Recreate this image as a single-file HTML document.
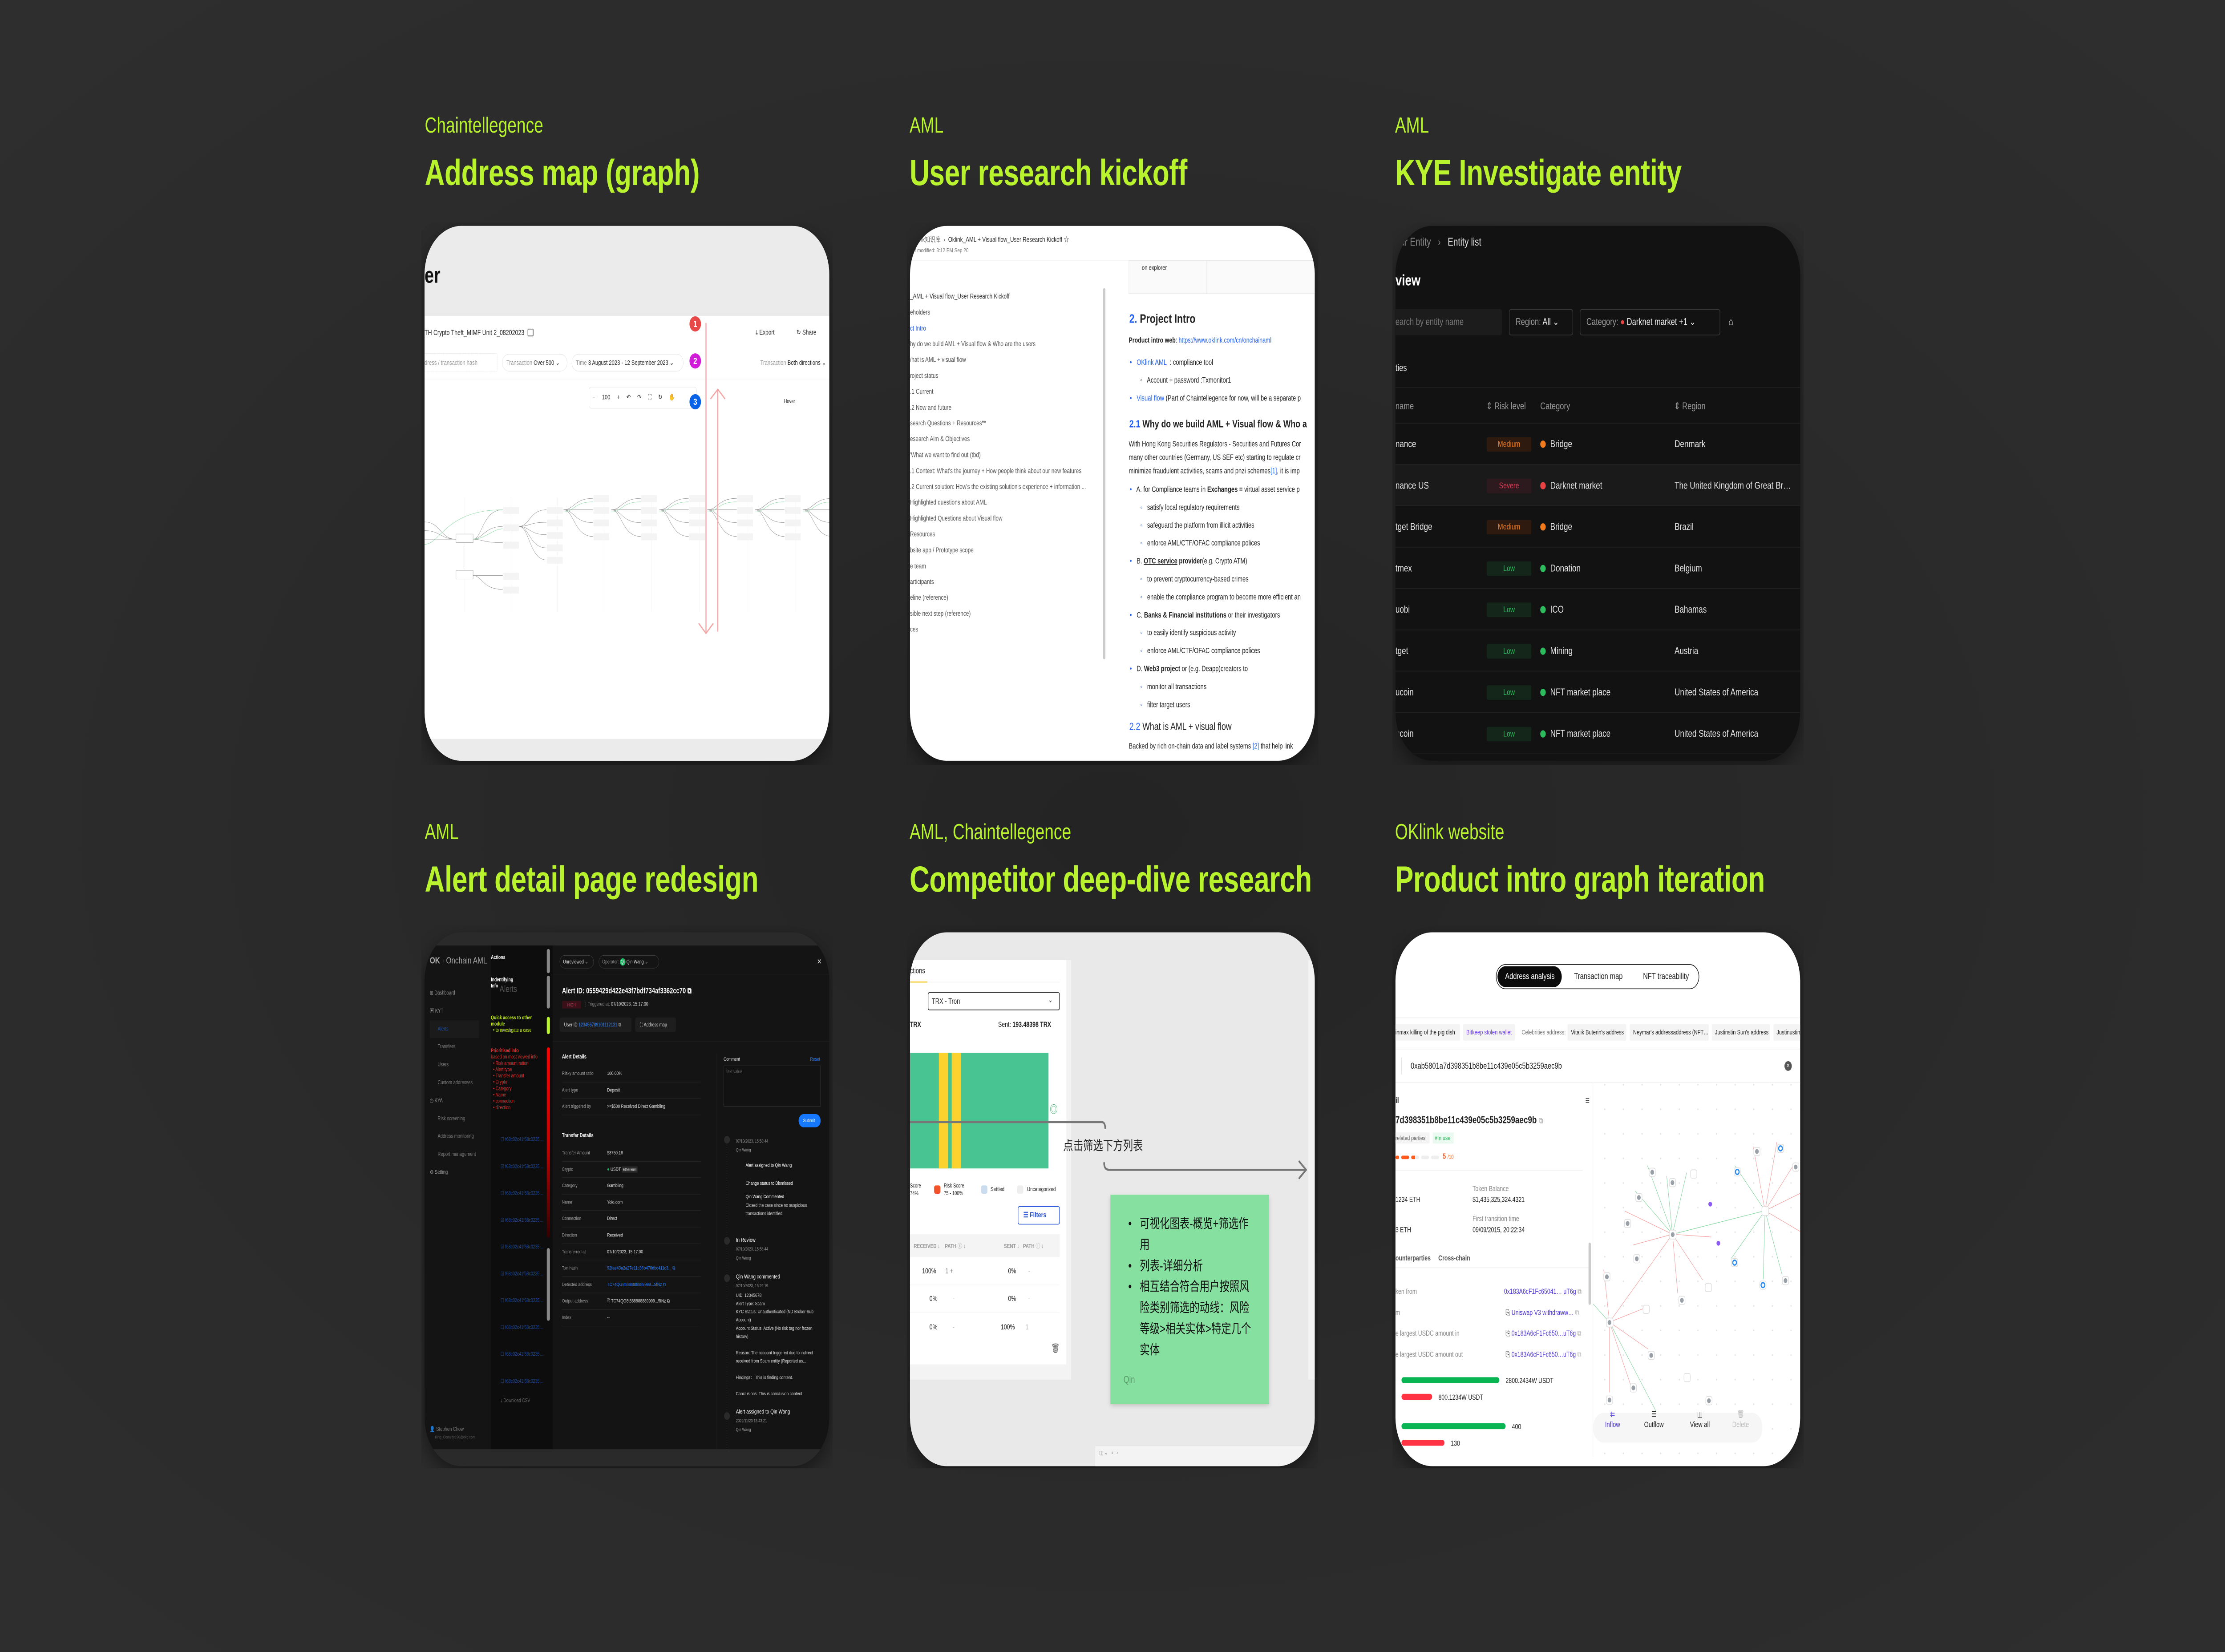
<!DOCTYPE html>
<html><head><meta charset="utf-8">
<style>
*{margin:0;padding:0;box-sizing:border-box}
html,body{width:100%;height:100%;overflow:hidden;background:#2a2a2a}
#root{position:absolute;left:0;top:0;width:6600px;height:3713px;transform-origin:0 0;overflow:hidden;background:radial-gradient(ellipse at 50% 50%,#242424 0%,#2b2b2b 60%,#2e2e2e 100%);font-family:"Liberation Sans","Noto Sans CJK SC",sans-serif}
.a{position:absolute}
.lbl{position:absolute;color:#b8f32e;font-size:49px;line-height:1;white-space:nowrap}
.ttl{position:absolute;color:#b8f32e;font-size:82px;font-weight:bold;line-height:1;white-space:nowrap;letter-spacing:-0.5px}
.wrap{position:absolute;width:1568px;height:1568px;transform:scale(0.77806);transform-origin:0 0;overflow:hidden}
.card{position:absolute;left:12px;top:10px;width:1543px;height:1545px;border-radius:140px;overflow:hidden;box-shadow:0 20px 60px rgba(0,0,0,.45)}
.t{position:absolute;white-space:nowrap;line-height:1}
</style></head><body>
<div id="root">

<div class="lbl" style="left:1260px;top:258px">Chaintellegence</div>
<div class="ttl" style="left:1260px;top:348px">Address map (graph)</div>
<div class="lbl" style="left:2698px;top:258px">AML</div>
<div class="ttl" style="left:2698px;top:348px">User research kickoff</div>
<div class="lbl" style="left:4138px;top:258px">AML</div>
<div class="ttl" style="left:4138px;top:348px">KYE Investigate entity</div>
<div class="lbl" style="left:1260px;top:1846px">AML</div>
<div class="ttl" style="left:1260px;top:1936px">Alert detail page redesign</div>
<div class="lbl" style="left:2698px;top:1846px">AML, Chaintellegence</div>
<div class="ttl" style="left:2698px;top:1936px">Competitor deep-dive research</div>
<div class="lbl" style="left:4138px;top:1846px">OKlink website</div>
<div class="ttl" style="left:4138px;top:1936px">Product intro graph iteration</div>

<!-- CARD 1 -->
<div class="wrap" style="left:1250px;top:500px">
<div class="card" style="background:#fff">
 <div class="a" style="left:0;top:0;width:1543px;height:260px;background:#ebebeb"></div>
 <div class="t" style="left:0;top:110px;font-size:64px;font-weight:bold;color:#111">er</div>
 <div class="a" style="left:0;top:1482px;width:1543px;height:70px;background:#ebebeb"></div>
 <div class="t" style="left:0;top:298px;font-size:21px;color:#222">TH Crypto Theft_MIMF Unit 2_08202023</div>
 <div class="a" style="left:393px;top:297px;width:22px;height:22px;border:2px solid #333;border-radius:3px"></div>
 <div class="t" style="left:1262px;top:298px;font-size:20px;color:#222">⤓ Export</div>
 <div class="t" style="left:1418px;top:298px;font-size:20px;color:#222">↻ Share</div>
 <div class="a" style="left:-20px;top:368px;width:298px;height:54px;border:1.5px dashed #ddd;border-radius:6px"></div>
 <div class="t" style="left:0;top:386px;font-size:19px;color:#999">dress / transaction hash</div>
 <div class="a" style="left:296px;top:370px;width:248px;height:50px;border:1.5px solid #ddd;border-radius:25px"></div>
 <div class="t" style="left:312px;top:386px;font-size:19px;color:#999">Transaction <span style="color:#222">Over 500 ⌄</span></div>
 <div class="a" style="left:561px;top:370px;width:426px;height:50px;border:1.5px solid #ddd;border-radius:25px"></div>
 <div class="t" style="left:577px;top:386px;font-size:19px;color:#999">Time <span style="color:#222">3 August 2023 - 12 September 2023 ⌄</span></div>
 <div class="t" style="left:1280px;top:386px;font-size:19px;color:#999">Transaction <span style="color:#222">Both directions ⌄</span></div>
 <div class="a" style="left:0;top:442px;width:1543px;height:1px;background:#eee"></div>
 <div class="a" style="left:626px;top:465px;width:412px;height:62px;border:1.5px solid #ddd;border-radius:10px"></div>
 <div class="t" style="left:640px;top:486px;font-size:19px;color:#333;word-spacing:20px">− 100 + ↶ ↷ ⛶ ↻ ✋</div>
 <div class="t" style="left:1370px;top:500px;font-size:16px;color:#222">Hover</div>
 <svg class="a" style="left:0;top:0" width="1543" height="1545" viewBox="0 0 1543 1545">
  <g stroke="#eee" stroke-width="1">
   <line x1="151" y1="785" x2="151" y2="1115"/><line x1="330" y1="785" x2="330" y2="1115"/><line x1="506" y1="785" x2="506" y2="1115"/><line x1="684" y1="785" x2="684" y2="1115"/><line x1="866" y1="785" x2="866" y2="1115"/><line x1="1049" y1="785" x2="1049" y2="1115"/><line x1="1232" y1="785" x2="1232" y2="1115"/><line x1="1415" y1="785" x2="1415" y2="1115"/>
  </g>
  <defs><g id="fan" fill="none" stroke="#888" stroke-width="1">
   <path d="M0 0 C40 0 40 -33 112 -33"/><path d="M0 0 C40 0 60 0 112 0"/><path d="M0 0 C40 0 40 37 112 37"/><path d="M0 0 C40 0 40 77 112 77"/>
   <path d="M0 6 C40 6 40 -23 112 -23" stroke="#7fd49c"/>
   <rect x="114" y="-42" width="60" height="20" fill="#f4f4f4" stroke="none"/><rect x="114" y="-8" width="60" height="20" fill="#f4f4f4" stroke="none"/><rect x="114" y="28" width="60" height="20" fill="#f4f4f4" stroke="none"/><rect x="114" y="68" width="60" height="20" fill="#f4f4f4" stroke="none"/>
  </g></defs>
  <use href="#fan" x="530" y="820"/><use href="#fan" x="712" y="820"/><use href="#fan" x="895" y="820"/><use href="#fan" x="1078" y="820"/><use href="#fan" x="1260" y="820"/><use href="#fan" x="1443" y="820"/>
  <g fill="none" stroke="#888" stroke-width="1">
   <path d="M360 868 C400 868 400 820 465 820"/><path d="M360 868 C400 868 400 856 465 856"/><path d="M360 868 C400 868 400 892 465 892"/><path d="M360 868 C400 868 400 930 465 930"/><path d="M360 868 C400 868 400 965 465 965"/>
   <path d="M185 905 C220 905 220 820 298 820"/><path d="M185 905 C220 905 230 868 298 868"/><path d="M185 905 C220 905 220 915 298 915"/>
   <path d="M0 855 C60 855 60 905 120 905"/><path d="M0 880 C60 880 60 905 120 905"/><path d="M0 905 L120 905"/>
   <path d="M150 925 L150 990"/><path d="M185 1010 L298 1010"/><path d="M185 1010 C220 1010 220 1050 298 1050"/>
   <path d="M0 920 C60 920 80 820 298 820" stroke="#7fd49c"/><path d="M185 905 C230 905 260 875 298 875" stroke="#7fd49c"/>
  </g>
  <g fill="#f4f4f4"><rect x="300" y="812" width="60" height="20"/><rect x="300" y="862" width="60" height="20"/><rect x="300" y="912" width="60" height="20"/><rect x="467" y="812" width="60" height="20"/><rect x="467" y="848" width="60" height="20"/><rect x="467" y="884" width="60" height="20"/><rect x="467" y="920" width="60" height="20"/><rect x="467" y="956" width="60" height="20"/><rect x="300" y="1002" width="60" height="20"/><rect x="300" y="1042" width="60" height="20"/></g>
  <rect x="120" y="890" width="65" height="25" fill="#fff" stroke="#888"/><rect x="120" y="995" width="65" height="25" fill="#fff" stroke="#888"/>
  <g stroke="#f4a5a5" stroke-width="4" fill="none">
   <line x1="1073" y1="280" x2="1073" y2="1175"/><path d="M1045 1148 L1073 1177 L1101 1148"/>
   <line x1="1118" y1="472" x2="1118" y2="1172"/><path d="M1090 500 L1118 472 L1146 500"/>
  </g>
  <circle cx="1032" cy="283" r="22" fill="#e74848"/><circle cx="1032" cy="390" r="22" fill="#d01ed8"/><circle cx="1032" cy="508" r="22" fill="#0a63e6"/>
  <g fill="#fff" font-family="Liberation Sans" font-weight="bold" font-size="26" text-anchor="middle"><text x="1032" y="292">1</text><text x="1032" y="399">2</text><text x="1032" y="517">3</text></g>
 </svg>
</div></div>

<!-- CARD 2 -->
<div class="wrap" style="left:2690px;top:500px">
<div class="card" style="background:#fff;color:#222">
 <div class="t" style="left:20px;top:30px;font-size:20px;color:#666">Link知识库 &nbsp;›&nbsp; <span style="color:#222">Oklink_AML + Visual flow_User Research Kickoff ☆</span></div>
 <div class="t" style="left:0;top:62px;font-size:17px;color:#777">ast modified: 3:12 PM Sep 20</div>
 <div class="a" style="left:0;top:98px;width:1543px;height:2px;background:#eee"></div>
 <div class="a" style="left:736px;top:180px;width:9px;height:1072px;background:#ccc;border-radius:5px"></div>
 <div class="a" style="left:0;top:182px;font-size:20px;color:#555;line-height:45.8px;white-space:nowrap">
  <div style="color:#333">_AML + Visual flow_User Research Kickoff</div><div>eholders</div><div style="color:#1f5ff5">ct Intro</div><div>hy do we build AML + Visual flow &amp; Who are the users</div><div>/hat is AML + visual flow</div><div>roject status</div><div>.1 Current</div><div>.2 Now and future</div><div>search Questions + Resources**</div><div>esearch Aim &amp; Objectives</div><div>'What we want to find out (tbd)</div><div>.1 Context: What's the journey + How people think about our new features</div><div>.2 Current solution: How's the existing solution's experience + information ...</div><div>Highlighted questions about AML</div><div>Highlighted Questions about Visual flow</div><div>Resources</div><div>bsite app / Prototype scope</div><div>e team</div><div>articipants</div><div>eline (reference)</div><div>sible next step (reference)</div><div>ces</div>
 </div>
 <div class="a" style="left:834px;top:100px;width:720px;height:96px;border:1px solid #ddd;background:#fafafa"></div>
 <div class="a" style="left:1131px;top:100px;width:1px;height:96px;background:#ddd"></div>
 <div class="t" style="left:884px;top:112px;font-size:19px">on explorer</div>
 <div class="t" style="left:836px;top:250px;font-size:36px;font-weight:bold"><span style="color:#1f5ff5">2.</span> Project Intro</div>
 <div class="t" style="left:834px;top:320px;font-size:21px"><b>Product intro web</b>: <span style="color:#1f5ff5">https://www.oklink.com/cn/onchainaml</span></div>
 <div class="a" style="left:838px;top:368px;font-size:22px;line-height:51.8px;white-space:nowrap">
  <div><span style="color:#1f5ff5">•&nbsp;&nbsp; OKlink AML </span>&nbsp;: compliance tool</div>
  <div style="padding-left:40px">◦&nbsp;&nbsp; Account + password :Txmonitor1</div>
  <div><span style="color:#1f5ff5">•&nbsp;&nbsp; Visual flow</span> (Part of Chaintellegence for now, will be a separate p</div>
 </div>
 <div class="t" style="left:836px;top:558px;font-size:30px;font-weight:bold"><span style="color:#1f5ff5">2.1</span> Why do we build AML + Visual flow &amp; Who a</div>
 <div class="a" style="left:834px;top:610px;font-size:22px;line-height:39px;white-space:nowrap">With Hong Kong Securities Regulators - Securities and Futures Cor<br>many other countries (Germany, US SEF etc) starting to regulate cr<br>minimize fraudulent activities, scams and pnzi schemes<span style="color:#1f5ff5">[1]</span>, it is imp</div>
 <div class="a" style="left:838px;top:735px;font-size:22px;line-height:51.8px;white-space:nowrap">
  <div><span style="color:#1f5ff5">•</span>&nbsp;&nbsp; A. for Compliance teams in <b>Exchanges =</b> virtual asset service p</div>
  <div style="padding-left:40px"><span style="color:#1f5ff5">◦</span>&nbsp;&nbsp; satisfy local regulatory requirements</div>
  <div style="padding-left:40px"><span style="color:#1f5ff5">◦</span>&nbsp;&nbsp; safeguard the platform from illicit activities</div>
  <div style="padding-left:40px"><span style="color:#1f5ff5">◦</span>&nbsp;&nbsp; enforce AML/CTF/OFAC compliance polices</div>
  <div><span style="color:#1f5ff5">•</span>&nbsp;&nbsp; B. <b><u>OTC service</u> provider</b>(e.g. Crypto ATM)</div>
  <div style="padding-left:40px"><span style="color:#1f5ff5">◦</span>&nbsp;&nbsp; to prevent cryptocurrency-based crimes</div>
  <div style="padding-left:40px"><span style="color:#1f5ff5">◦</span>&nbsp;&nbsp; enable the compliance program to become more efficient an</div>
  <div><span style="color:#1f5ff5">•</span>&nbsp;&nbsp; C. <b>Banks &amp; Financial institutions</b> or their investigators</div>
  <div style="padding-left:40px"><span style="color:#1f5ff5">◦</span>&nbsp;&nbsp; to easily identify suspicious activity</div>
  <div style="padding-left:40px"><span style="color:#1f5ff5">◦</span>&nbsp;&nbsp; enforce AML/CTF/OFAC compliance polices</div>
  <div><span style="color:#1f5ff5">•</span>&nbsp;&nbsp; D. <b>Web3 project</b> or (e.g. Deapp)creators to</div>
  <div style="padding-left:40px"><span style="color:#1f5ff5">◦</span>&nbsp;&nbsp; monitor all transactions</div>
  <div style="padding-left:40px"><span style="color:#1f5ff5">◦</span>&nbsp;&nbsp; filter target users</div>
 </div>
 <div class="t" style="left:836px;top:1432px;font-size:30px"><span style="color:#1f5ff5">2.2</span> What is AML + visual flow</div>
 <div class="t" style="left:834px;top:1492px;font-size:22px">Backed by rich on-chain data and label systems <span style="color:#1f5ff5">[2]</span> that help link</div>
</div></div>

<!-- CARD 3 -->
<div class="wrap" style="left:4130px;top:500px">
<div class="card" style="background:#121212;color:#e6e6e6">
 <div class="t" style="left:0;top:30px;font-size:32px;color:#888">our Entity &nbsp;&nbsp;›&nbsp;&nbsp; <span style="color:#e6e6e6">Entity list</span></div>
 <div class="t" style="left:0;top:136px;font-size:44px;font-weight:bold;color:#fff">view</div>
 <div class="a" style="left:-10px;top:240px;width:416px;height:76px;background:#1c1c1c;border-radius:8px"></div>
 <div class="t" style="left:0;top:263px;font-size:28px;color:#777">earch by entity name</div>
 <div class="a" style="left:433px;top:240px;width:244px;height:76px;border:2px solid #3a3a3a;border-radius:8px"></div>
 <div class="t" style="left:458px;top:263px;font-size:28px;color:#999">Region: <span style="color:#eee">All ⌄</span></div>
 <div class="a" style="left:703px;top:240px;width:535px;height:76px;border:2px solid #3a3a3a;border-radius:8px"></div>
 <div class="t" style="left:728px;top:263px;font-size:28px;color:#999">Category: <span style="color:#e84343">●</span> <span style="color:#eee">Darknet market +1 ⌄</span></div>
 <div class="t" style="left:1270px;top:262px;font-size:30px;color:#ddd">⌂</div>
 <div class="t" style="left:0;top:396px;font-size:28px">ties</div>
 <div class="a" style="left:0;top:466px;width:1543px;height:2px;background:#222"></div>
 <div class="t" style="left:0;top:507px;font-size:28px;color:#999">name</div>
 <div class="t" style="left:346px;top:507px;font-size:28px;color:#999">⇕ Risk level</div>
 <div class="t" style="left:552px;top:507px;font-size:28px;color:#999">Category</div>
 <div class="t" style="left:1062px;top:507px;font-size:28px;color:#999">⇕ Region</div>
 <div class="a" style="left:0;top:569px;width:1543px;height:2px;background:#222"></div>
 <div class="a" style="left:0;top:690px;width:1543px;height:118px;background:#1a1a1a"></div>
 <div class="a" style="left:0;top:570px;width:1543px;font-size:29px;">
  <style>.r{height:119.5px;position:relative;border-bottom:2px solid #222;overflow:hidden}.r span{position:absolute;top:46px;white-space:nowrap;line-height:1}.bd{position:absolute;left:348px;top:40px;width:170px;height:42px;border-radius:5px;font-size:24px;text-align:center;line-height:42px}.dot{position:absolute;left:552px;top:50px;width:21px;height:21px;border-radius:50%}</style>
  <div class="r"><span style="left:0">nance</span><div class="bd" style="background:#2e1a0f;color:#f07a1e">Medium</div><div class="dot" style="background:#f07a1e"></div><span style="left:590px">Bridge</span><span style="left:1064px">Denmark</span></div>
  <div class="r"><span style="left:0">nance US</span><div class="bd" style="background:#2d1a1e;color:#d9405a">Severe</div><div class="dot" style="background:#e84343"></div><span style="left:590px">Darknet market</span><span style="left:1064px">The United Kingdom of Great Br…</span></div>
  <div class="r"><span style="left:0">tget Bridge</span><div class="bd" style="background:#2e1a0f;color:#f07a1e">Medium</div><div class="dot" style="background:#f07a1e"></div><span style="left:590px">Bridge</span><span style="left:1064px">Brazil</span></div>
  <div class="r"><span style="left:0">tmex</span><div class="bd" style="background:#14251a;color:#2dbb5e">Low</div><div class="dot" style="background:#2dbb5e"></div><span style="left:590px">Donation</span><span style="left:1064px">Belgium</span></div>
  <div class="r"><span style="left:0">uobi</span><div class="bd" style="background:#14251a;color:#2dbb5e">Low</div><div class="dot" style="background:#2dbb5e"></div><span style="left:590px">ICO</span><span style="left:1064px">Bahamas</span></div>
  <div class="r"><span style="left:0">tget</span><div class="bd" style="background:#14251a;color:#2dbb5e">Low</div><div class="dot" style="background:#2dbb5e"></div><span style="left:590px">Mining</span><span style="left:1064px">Austria</span></div>
  <div class="r"><span style="left:0">ucoin</span><div class="bd" style="background:#14251a;color:#2dbb5e">Low</div><div class="dot" style="background:#2dbb5e"></div><span style="left:590px">NFT market place</span><span style="left:1064px">United States of America</span></div>
  <div class="r"><span style="left:0">ucoin</span><div class="bd" style="background:#14251a;color:#2dbb5e">Low</div><div class="dot" style="background:#2dbb5e"></div><span style="left:590px">NFT market place</span><span style="left:1064px">United States of America</span></div>
 </div>
</div></div>

<!-- CARD 4 Alert -->
<div class="wrap" style="left:1250px;top:2080px">
<div class="card" style="top:20px;height:1542px;background:#2a2a2a;color:#ddd">
 <div class="a" style="left:0;top:38px;width:253px;height:1455px;background:#141414"></div>
 <div class="a" style="left:253px;top:38px;width:236px;height:1455px;background:#0d0d0d"></div>
 <div class="a" style="left:489px;top:38px;width:1054px;height:1455px;background:#141414"></div>
 <div class="t" style="left:20px;top:68px;font-size:26px;color:#aaa"><b>OK</b> · Onchain AML</div>
 <div class="a" style="left:20px;top:150px;font-size:16px;color:#777;line-height:51.8px;white-space:nowrap">
  <div style="color:#999">⊞ Dashboard</div><div style="color:#999">▣ KYT</div><div style="padding-left:30px;color:#1d4c9e;background:#1b1b1b;margin-right:-12px">Alerts</div><div style="padding-left:30px">Transfers</div><div style="padding-left:30px">Users</div><div style="padding-left:30px">Custom addresses</div><div style="color:#999">◷ KYA</div><div style="padding-left:30px">Risk screening</div><div style="padding-left:30px">Address monitoring</div><div style="padding-left:30px">Report management</div><div style="color:#999">⚙ Setting</div>
 </div>
 <div class="t" style="left:20px;top:1428px;font-size:16px;color:#777">👤 Stephen Chow</div>
 <div class="t" style="left:40px;top:1452px;font-size:12px;color:#555">King_Comedy196@okg.com</div>
 <div class="t" style="left:253px;top:65px;font-size:15px;color:#fff;font-weight:bold">Actions</div>
 <div class="t" style="left:253px;top:128px;font-size:15px;color:#fff;font-weight:bold;line-height:18px;white-space:normal;width:100px">Indentifying Info</div>
 <div class="t" style="left:286px;top:150px;font-size:26px;color:#555">Alerts</div>
 <div class="t" style="left:253px;top:238px;font-size:15px;color:#c4f000;font-weight:bold;line-height:18px">Quick access to other<br>module<br>&nbsp;&nbsp;• <span style="font-weight:normal">to investigate a case</span></div>
 <div class="t" style="left:253px;top:333px;font-size:15px;color:#e03030;line-height:18.3px"><b>Prioritised info</b><br>based on most viewed info<br>&nbsp;&nbsp;• Risk amount ration<br>&nbsp;&nbsp;• Alert type<br>&nbsp;&nbsp;• Transfer amount<br>&nbsp;&nbsp;• Crypto<br>&nbsp;&nbsp;• Category<br>&nbsp;&nbsp;• Name<br>&nbsp;&nbsp;• connection<br>&nbsp;&nbsp;• direction</div>
 <div class="a" style="left:466px;top:48px;width:12px;height:70px;background:#888;border-radius:6px"></div>
 <div class="a" style="left:466px;top:125px;width:12px;height:95px;background:#888;border-radius:6px"></div>
 <div class="a" style="left:466px;top:244px;width:12px;height:50px;background:#b8f32e;border-radius:6px"></div>
 <div class="a" style="left:466px;top:332px;width:12px;height:550px;background:linear-gradient(#f00,#c00 50%,#300);border-radius:6px"></div>
 <div class="a" style="left:466px;top:912px;width:12px;height:210px;background:#888;border-radius:6px"></div>
 <div class="a" style="left:290px;top:560px;font-size:15px;color:#1d4c9e;line-height:77.5px;white-space:nowrap">
  <div>☐ f68c02c41f68c0235...</div><div>☑ f68c02c41f68c0235...</div><div>☐ f68c02c41f68c0235...</div><div>☑ f68c02c41f68c0235...</div><div>☑ f68c02c41f68c0235...</div><div>☑ f68c02c41f68c0235...</div><div>☐ f68c02c41f68c0235...</div><div>☐ f68c02c41f68c0235...</div><div>☐ f68c02c41f68c0235...</div><div>☐ f68c02c41f68c0235...</div>
 </div>
 <div class="t" style="left:290px;top:1345px;font-size:15px;color:#666">⤓ Download CSV</div>
 <div class="a" style="left:515px;top:66px;width:130px;height:38px;border:1.5px solid #444;border-radius:19px"></div>
 <div class="t" style="left:528px;top:78px;font-size:15px">Unreviewed ⌄</div>
 <div class="a" style="left:664px;top:66px;width:230px;height:38px;border:1.5px solid #444;border-radius:19px"></div>
 <div class="t" style="left:677px;top:78px;font-size:15px;color:#888">Operator: <span style="background:#1ec26a;color:#fff;border-radius:50%;padding:2px 3px">Qi</span> <span style="color:#ddd">Qin Wang ⌄</span></div>
 <div class="t" style="left:1496px;top:74px;font-size:22px;color:#ddd">✕</div>
 <div class="a" style="left:489px;top:120px;width:1054px;height:1px;background:#262626"></div>
 <div class="t" style="left:524px;top:158px;font-size:22px;color:#fff;font-weight:bold">Alert ID: 0559429d422e43f7bdf734af3362cc70 ⧉</div>
 <div class="a" style="left:524px;top:198px;width:72px;height:22px;background:#3a1018"></div>
 <div class="t" style="left:544px;top:203px;font-size:13px;color:#d03050">HIGH</div>
 <div class="t" style="left:610px;top:200px;font-size:15px;color:#888">| &nbsp;Triggered at: <span style="color:#ddd">07/10/2023, 15:17:00</span></div>
 <div class="a" style="left:515px;top:246px;width:274px;height:42px;background:#1e1e1e;border-radius:6px"></div>
 <div class="t" style="left:532px;top:260px;font-size:15px">User ID <span style="color:#2a7fff">123456789101112131</span> ⧉</div>
 <div class="a" style="left:803px;top:246px;width:155px;height:42px;background:#1e1e1e;border-radius:6px"></div>
 <div class="t" style="left:822px;top:260px;font-size:15px">⛶ Address map</div>
 <div class="a" style="left:489px;top:314px;width:1054px;height:1px;background:#262626"></div>
 <div class="t" style="left:524px;top:352px;font-size:16px;color:#fff;font-weight:bold">Alert Details</div>
 <div class="a" style="left:524px;top:385px;width:530px;font-size:14.5px;line-height:47.6px">
  <style>.kv{border-bottom:1px solid #2a2a2a;position:relative;height:47.6px}.kv i{font-style:normal;color:#999}.kv b{font-weight:normal;position:absolute;left:172px;top:0;white-space:nowrap}</style>
  <div class="kv"><i>Risky amount ratio</i><b>100.00%</b></div><div class="kv"><i>Alert type</i><b>Deposit</b></div><div class="kv"><i>Alert triggered by</i><b>&gt;=$500 Received Direct Gambling</b></div>
 </div>
 <div class="t" style="left:524px;top:580px;font-size:16px;color:#fff;font-weight:bold">Transfer Details</div>
 <div class="a" style="left:524px;top:614px;width:530px;font-size:14.5px;line-height:47.6px">
  <div class="kv"><i>Transfer Amount</i><b>$3750.18</b></div><div class="kv"><i>Crypto</i><b><span style="color:#1ec26a">●</span> USDT <span style="background:#2a2a2a;padding:2px 4px;font-size:12px">Ethereum</span></b></div><div class="kv"><i>Category</i><b>Gambling</b></div><div class="kv"><i>Name</i><b>Yolo.com</b></div><div class="kv"><i>Connection</i><b>Direct</b></div><div class="kv"><i>Direction</i><b>Received</b></div><div class="kv"><i>Transferred at</i><b>07/10/2023, 15:17:00</b></div><div class="kv"><i>Txn hash</i><b style="color:#2a7fff">92fae43a2a27e11c36b470dbc411c3... ⧉</b></div><div class="kv"><i>Detected address</i><b style="color:#2a7fff">TC74QG8t888888889999...5fNz ⧉</b></div><div class="kv"><i>Output address</i><b>⎘ TC74QG8t888888889999...5fNz ⧉</b></div><div class="kv"><i>Index</i><b>--</b></div>
 </div>
 <div class="a" style="left:1114px;top:350px;width:1px;height:1150px;background:#262626"></div>
 <div class="t" style="left:1140px;top:360px;font-size:14.5px">Comment</div>
 <div class="t" style="left:1470px;top:360px;font-size:14.5px;color:#2a7fff">Reset</div>
 <div class="a" style="left:1140px;top:385px;width:370px;height:118px;border:1px solid #3a3a3a;background:#121212"></div>
 <div class="t" style="left:1148px;top:395px;font-size:14px;color:#666">Text value</div>
 <div class="a" style="left:1426px;top:525px;width:84px;height:38px;background:#1677ff;border-radius:19px"></div>
 <div class="t" style="left:1443px;top:537px;font-size:14.5px;color:#fff">Submit</div>
 <div class="a" style="left:1152px;top:595px;width:1px;height:900px;border-left:1px dashed #444"></div>
 <div class="a" style="left:1187px;top:590px;font-size:13px;color:#999;line-height:26px;white-space:nowrap">
  <div>07/10/2023, 15:58:44</div><div>Qin Wang</div>
  <div style="color:#fff;font-size:14.5px;margin-top:5px;padding-left:37px;line-height:52px">Alert assigned to Qin Wang<br>Change status to Dismissed</div>
  <div style="color:#fff;font-size:14.5px;padding-left:37px">Qin Wang Commented</div>
  <div style="color:#ccc;font-size:14.5px;padding-left:37px;line-height:24px">Closed the case since no suspicious<br>transactions identified.</div>
 </div>
 <div class="a" style="left:1187px;top:876px;font-size:13px;color:#999;line-height:26px;white-space:nowrap">
  <div style="color:#fff;font-size:17px">In Review</div><div>07/10/2023, 15:58:44</div><div>Qin Wang</div>
  <div style="color:#fff;font-size:17px;margin-top:28px">Qin Wang commented</div><div>07/10/2023, 15:26:19</div>
  <div style="color:#ddd;font-size:14.5px;line-height:23.7px;margin-top:4px">UID: 12345678<br>Alert Type: Scam<br>KYC Status: Unauthenticated (ND Broker-Sub<br>Account)<br>Account Status: Active (No risk tag nor frozen<br>history)<br><br>Reason: The account triggered due to indirect<br>received from Scam entity (Reported as...<br><br>Findings： This is finding content.<br><br>Conclusions: This is conclusion content</div>
  <div style="color:#fff;font-size:17px;margin-top:26px">Alert assigned to Qin Wang</div><div>2022/11/23 13:43:21</div><div>Qin Wang</div>
 </div>
 <div class="a" style="left:1142px;top:588px;width:22px;height:22px;border-radius:50%;background:#2a2a2a"></div>
 <div class="a" style="left:1142px;top:880px;width:22px;height:22px;border-radius:50%;background:#2a2a2a"></div>
 <div class="a" style="left:1142px;top:988px;width:22px;height:22px;border-radius:50%;background:#2a2a2a"></div>
 <div class="a" style="left:1142px;top:1386px;width:22px;height:22px;border-radius:50%;background:#2a2a2a"></div>
</div></div>

<!-- CARD 5 Competitor -->
<div class="wrap" style="left:2690px;top:2080px">
<div class="card" style="top:20px;height:1542px;background:#e9e9e9;color:#222">
 <div class="a" style="left:0;top:80px;width:614px;height:1212px;background:#f3f3f3"></div>
 <div class="a" style="left:0;top:80px;width:596px;height:1168px;background:#fff"></div>
 <div class="t" style="left:0;top:100px;font-size:22px">ctions</div>
 <div class="a" style="left:0;top:142px;width:66px;height:3px;background:#f5c518"></div>
 <div class="a" style="left:66px;top:143px;width:505px;height:1px;background:#ddd"></div>
 <div class="a" style="left:68px;top:173px;width:503px;height:52px;border:2px solid #222;border-radius:6px"></div>
 <div class="t" style="left:83px;top:188px;font-size:22px">TRX - Tron</div>
 <div class="t" style="left:527px;top:186px;font-size:20px">⌄</div>
 <div class="t" style="left:0;top:256px;font-size:21px;font-weight:bold">TRX</div>
 <div class="t" style="left:336px;top:256px;font-size:21px">Sent: <b>193.48398 TRX</b></div>
 <div class="a" style="left:0;top:348px;width:528px;height:334px;background:#48c493"></div>
 <div class="a" style="left:110px;top:348px;width:35px;height:334px;background:#fcd22e"></div>
 <div class="a" style="left:159px;top:348px;width:35px;height:334px;background:#fcd22e"></div>
 <div class="t" style="left:533px;top:498px;font-size:30px;color:#3cb371">◎</div>
 <div class="t" style="left:0;top:722px;font-size:16px;line-height:22px">Score<br>74%</div>
 <div class="a" style="left:92px;top:731px;width:24px;height:24px;border-radius:6px;background:#f3532b"></div>
 <div class="t" style="left:129px;top:722px;font-size:16px;line-height:22px">Risk Score<br>75 - 100%</div>
 <div class="a" style="left:271px;top:731px;width:24px;height:24px;border-radius:6px;background:#cbdcee"></div>
 <div class="t" style="left:307px;top:733px;font-size:17px">Settled</div>
 <div class="a" style="left:408px;top:731px;width:24px;height:24px;border-radius:6px;background:#eee"></div>
 <div class="t" style="left:446px;top:733px;font-size:17px">Uncategorized</div>
 <div class="a" style="left:411px;top:791px;width:160px;height:53px;border:2px solid #2452d8;border-radius:6px"></div>
 <div class="t" style="left:432px;top:806px;font-size:21px;color:#2452d8;font-weight:bold">☰ Filters</div>
 <div class="a" style="left:0;top:872px;width:571px;height:66px;background:#f4f4f4"></div>
 <div class="t" style="left:14px;top:898px;font-size:17px;color:#999;font-weight:bold">RECEIVED ↓ &nbsp;&nbsp; PATH ⓘ ↓</div>
 <div class="t" style="left:358px;top:898px;font-size:17px;color:#999;font-weight:bold">SENT ↓ &nbsp; PATH ⓘ ↓</div>
 <div class="t" style="left:46px;top:968px;font-size:21px">100% &nbsp;&nbsp;&nbsp;&nbsp; <span style="color:#777">1 +</span></div>
 <div class="t" style="left:374px;top:968px;font-size:21px">0% &nbsp;&nbsp;&nbsp;&nbsp;&nbsp;&nbsp; <span style="color:#bbb">-</span></div>
 <div class="a" style="left:0;top:1018px;width:571px;height:1px;background:#eee"></div>
 <div class="t" style="left:74px;top:1048px;font-size:21px">0% &nbsp;&nbsp;&nbsp;&nbsp;&nbsp;&nbsp;&nbsp;&nbsp; <span style="color:#bbb">-</span></div>
 <div class="t" style="left:374px;top:1048px;font-size:21px">0% &nbsp;&nbsp;&nbsp;&nbsp;&nbsp;&nbsp; <span style="color:#bbb">-</span></div>
 <div class="a" style="left:0;top:1098px;width:571px;height:1px;background:#eee"></div>
 <div class="t" style="left:74px;top:1130px;font-size:21px">0% &nbsp;&nbsp;&nbsp;&nbsp;&nbsp;&nbsp;&nbsp;&nbsp; <span style="color:#bbb">-</span></div>
 <div class="t" style="left:346px;top:1130px;font-size:21px">100% &nbsp;&nbsp;&nbsp;&nbsp;&nbsp; <span style="color:#bbb">1</span></div>
 <div class="t" style="left:538px;top:1188px;font-size:26px;color:#555">🗑</div>
 <div class="a" style="left:1518px;top:80px;width:25px;height:1212px;background:#f3f3f3"></div>
 <svg class="a" style="left:0;top:0" width="1543" height="1545"><g fill="none" stroke="#777" stroke-width="6" stroke-linecap="round" stroke-linejoin="round">
  <path d="M0 548 L730 548 Q744 548 744 565"/><path d="M740 666 Q740 686 760 686 L1510 686"/><path d="M1484 662 L1510 686 L1484 710"/></g></svg>
 <div class="t" style="left:584px;top:598px;font-size:38px;color:#222">点击筛选下方列表</div>
 <div class="a" style="left:764px;top:758px;width:605px;height:605px;background:#86e0a0;box-shadow:0 6px 14px rgba(0,0,0,.15)"></div>
 <div class="a" style="left:832px;top:812px;font-size:38px;line-height:60.8px;color:#111;width:480px">
  <div style="position:relative;padding-left:44px"><span style="position:absolute;left:0">•</span>可视化图表-概览+筛选作用</div>
  <div style="position:relative;padding-left:44px"><span style="position:absolute;left:0">•</span>列表-详细分析</div>
  <div style="position:relative;padding-left:44px"><span style="position:absolute;left:0">•</span>相互结合符合用户按照风险类别筛选的动线：风险等级&gt;相关实体&gt;特定几个实体</div>
 </div>
 <div class="t" style="left:814px;top:1278px;font-size:28px;color:#5a9a6a">Qin</div>
 <div class="a" style="left:706px;top:1483px;width:837px;height:62px;background:#f3f3f3;border-top:1px solid #ddd"></div>
 <div class="t" style="left:722px;top:1496px;font-size:16px;color:#666">◫ ⌄ &nbsp; ‹ &nbsp; ›</div>
</div></div>

<!-- CARD 6 Product intro -->
<div class="wrap" style="left:4130px;top:2080px">
<div class="card" style="top:20px;height:1542px;background:#fff;color:#222">
 <div class="a" style="left:383px;top:92px;width:775px;height:72px;border:2px solid #111;border-radius:36px"></div>
 <div class="a" style="left:389px;top:98px;width:245px;height:60px;background:#0b0b0b;border-radius:30px"></div>
 <div class="t" style="left:418px;top:115px;font-size:25px;color:#fff">Address analysis</div>
 <div class="t" style="left:681px;top:115px;font-size:25px">Transaction map</div>
 <div class="t" style="left:944px;top:115px;font-size:25px">NFT traceability</div>
 <div class="a" style="left:0;top:246px;width:1543px;height:2px;background:#eee"></div>
 <div class="a" style="left:-10px;top:265px;width:256px;height:48px;background:#f4f4f4;border-radius:4px"></div>
 <div class="t" style="left:0;top:280px;font-size:19px">inmax killing of the pig dish</div>
 <div class="a" style="left:258px;top:265px;width:198px;height:48px;background:#f4f4f4;border-radius:4px"></div>
 <div class="t" style="left:270px;top:280px;font-size:19px;color:#6a3cf0">Bitkeep stolen wallet</div>
 <div class="t" style="left:481px;top:280px;font-size:19px;color:#777">Celebrities address:</div>
 <div class="a" style="left:656px;top:265px;width:224px;height:48px;background:#f4f4f4;border-radius:4px"></div>
 <div class="t" style="left:669px;top:280px;font-size:19px">Vitalik Buterin's address</div>
 <div class="a" style="left:893px;top:265px;width:301px;height:48px;background:#f4f4f4;border-radius:4px"></div>
 <div class="t" style="left:906px;top:280px;font-size:19px">Neymar's addressaddress (NFT…</div>
 <div class="a" style="left:1206px;top:265px;width:222px;height:48px;background:#f4f4f4;border-radius:4px"></div>
 <div class="t" style="left:1218px;top:280px;font-size:19px">Justinstin Sun's address</div>
 <div class="a" style="left:1441px;top:265px;width:102px;height:48px;background:#f4f4f4;border-radius:4px;overflow:hidden"><span class="t" style="left:12px;top:15px;font-size:19px">Justinustin</span></div>
 <div class="a" style="left:0;top:336px;width:1543px;height:2px;background:#eee"></div>
 <div class="a" style="left:22px;top:362px;width:2px;height:48px;background:#e5e5e5"></div>
 <div class="t" style="left:58px;top:374px;font-size:25px">0xab5801a7d398351b8be11c439e05c5b3259aec9b</div>
 <div class="a" style="left:1483px;top:372px;width:28px;height:28px;border-radius:50%;background:#555;color:#fff;font-size:16px;text-align:center;line-height:28px">✕</div>
 <div class="a" style="left:0;top:432px;width:1543px;height:2px;background:#eee"></div>
 <div class="a" style="left:752px;top:434px;width:2px;height:1080px;background:#eee"></div>
 <div class="t" style="left:0;top:474px;font-size:24px;font-weight:bold">il</div>
 <div class="t" style="left:724px;top:478px;font-size:18px">☰</div>
 <div class="t" style="left:0;top:528px;font-size:29px;font-weight:bold">7d398351b8be11c439e05c5b3259aec9b <span style="font-weight:normal;color:#999;font-size:22px">⧉</span></div>
 <div class="a" style="left:-10px;top:578px;width:140px;height:32px;background:#f4f4f4"></div>
 <div class="t" style="left:0;top:585px;font-size:18px;color:#555">related parties</div>
 <div class="a" style="left:142px;top:578px;width:80px;height:32px;background:#eafaf0"></div>
 <div class="t" style="left:150px;top:585px;font-size:18px;color:#2dbb5e">#In use</div>
 <div class="a" style="left:0;top:645px;width:14px;height:10px;background:#ff5a1a;border-radius:5px"></div>
 <div class="a" style="left:22px;top:645px;width:30px;height:10px;background:#ff5a1a;border-radius:5px"></div>
 <div class="a" style="left:60px;top:645px;width:30px;height:10px;background:linear-gradient(90deg,#ff5a1a 50%,#eee 50%);border-radius:5px"></div>
 <div class="a" style="left:98px;top:645px;width:30px;height:10px;background:#eee;border-radius:5px"></div>
 <div class="a" style="left:136px;top:645px;width:30px;height:10px;background:#eee;border-radius:5px"></div>
 <div class="t" style="left:180px;top:636px;font-size:22px;color:#ff5a1a;font-weight:bold">5 <span style="font-weight:normal;font-size:17px">/10</span></div>
 <div class="a" style="left:0;top:686px;width:715px;height:2px;background:#eee"></div>
 <div class="t" style="left:294px;top:730px;font-size:21px;color:#888">Token Balance</div>
 <div class="t" style="left:0;top:762px;font-size:21px">1234 ETH</div>
 <div class="t" style="left:294px;top:762px;font-size:21px">$1,435,325,324.4321</div>
 <div class="t" style="left:294px;top:817px;font-size:21px;color:#888">First transition time</div>
 <div class="t" style="left:0;top:849px;font-size:21px">3 ETH</div>
 <div class="t" style="left:294px;top:849px;font-size:21px">09/09/2015, 20:22:34</div>
 <div class="t" style="left:0;top:931px;font-size:21px;color:#555;font-weight:bold">ounterparties &nbsp;&nbsp;&nbsp;&nbsp;Cross-chain</div>
 <div class="a" style="left:0;top:968px;width:740px;height:2px;background:#eee"></div>
 <div class="a" style="left:736px;top:896px;width:9px;height:180px;background:#ccc;border-radius:5px"></div>
 <div class="a" style="left:0;top:1008px;font-size:21px;color:#888;line-height:60.5px;white-space:nowrap"><div>ken from</div><div>m</div><div>e largest USDC amount in</div><div>e largest USDC amount out</div></div>
 <div class="a" style="left:414px;top:1008px;font-size:21px;color:#4a33d6;line-height:60.5px;white-space:nowrap"><div>0x183A6cF1Fc65041… uT6g <span style="color:#aaa">⧉</span></div><div>&nbsp;<span style="color:#333">⎘</span> Uniswap V3 withdraww… <span style="color:#aaa">⧉</span></div><div>&nbsp;<span style="color:#333">⎘</span> 0x183A6cF1Fc650…uT6g <span style="color:#aaa">⧉</span></div><div>&nbsp;<span style="color:#333">⎘</span> 0x183A6cF1Fc650…uT6g <span style="color:#aaa">⧉</span></div></div>
 <div class="a" style="left:23px;top:1285px;width:373px;height:17px;background:#08b552;border-radius:9px"></div>
 <div class="t" style="left:420px;top:1285px;font-size:21px">2800.2434W USDT</div>
 <div class="a" style="left:23px;top:1333px;width:117px;height:17px;background:#ff3344;border-radius:9px"></div>
 <div class="t" style="left:164px;top:1333px;font-size:21px">800.1234W USDT</div>
 <div class="a" style="left:23px;top:1418px;width:397px;height:17px;background:#08b552;border-radius:9px"></div>
 <div class="t" style="left:444px;top:1418px;font-size:21px">400</div>
 <div class="a" style="left:23px;top:1466px;width:164px;height:17px;background:#ff3344;border-radius:9px"></div>
 <div class="t" style="left:211px;top:1466px;font-size:21px">130</div>
 <svg class="a" style="left:754px;top:434px" width="789" height="1080">
  <defs><pattern id="dots" width="71" height="71" patternUnits="userSpaceOnUse"><circle cx="44" cy="6" r="2.5" fill="#e4e4e4"/></pattern></defs>
  <rect width="789" height="1080" fill="url(#dots)"/>
  <g stroke-width="1.5" fill="none">
   <path d="M302 438 L207 240" stroke="#7fd49c"/><path d="M302 438 L280 270" stroke="#7fd49c"/><path d="M302 438 L356 260" stroke="#7fd49c"/><path d="M302 438 L160 313" stroke="#7fd49c"/><path d="M302 438 L120 371" stroke="#f59a9a"/><path d="M302 438 L450 446" stroke="#f59a9a"/><path d="M302 438 L152 469" stroke="#f59a9a"/><path d="M302 438 L417 570" stroke="#f59a9a"/><path d="M302 438 L322 608" stroke="#f59a9a"/><path d="M302 438 L655 370" stroke="#7fd49c"/><path d="M302 438 L62 692" stroke="#f59a9a"/>
   <path d="M655 370 L609 182" stroke="#f59a9a"/><path d="M655 370 L700 172" stroke="#f59a9a"/><path d="M655 370 L540 240" stroke="#7fd49c"/><path d="M655 370 L770 230" stroke="#f59a9a"/><path d="M655 370 L526 508" stroke="#7fd49c"/><path d="M655 370 L648 568" stroke="#7fd49c"/><path d="M655 370 L720 555" stroke="#7fd49c"/><path d="M655 370 L789 430" stroke="#f59a9a"/><path d="M655 370 L789 320" stroke="#f59a9a"/>
   <path d="M62 692 L40 540" stroke="#f59a9a"/><path d="M62 692 L62 895" stroke="#f59a9a"/><path d="M62 692 L150 890" stroke="#f59a9a"/><path d="M62 692 L210 770" stroke="#f59a9a"/><path d="M62 692 L240 950" stroke="#7fd49c"/><path d="M62 692 L0 640" stroke="#7fd49c"/><path d="M62 692 L200 650" stroke="#f59a9a"/>
  </g>
  <g fill="#fff" stroke="#ddd" stroke-width="2">
   <rect x="290" y="426" width="26" height="26" rx="6"/><rect x="643" y="358" width="26" height="26" rx="6"/><rect x="50" y="680" width="26" height="26" rx="6"/>
   <rect x="213" y="247" width="24" height="24" rx="6"/><rect x="290" y="277" width="24" height="24" rx="6"/><rect x="162" y="320" width="24" height="24" rx="6"/><rect x="119" y="395" width="24" height="24" rx="6"/><rect x="371" y="252" width="24" height="24" rx="6"/><rect x="154" y="497" width="24" height="24" rx="6"/><rect x="326" y="617" width="24" height="24" rx="6"/><rect x="427" y="580" width="24" height="24" rx="6"/><rect x="40" y="549" width="24" height="24" rx="6"/><rect x="190" y="643" width="24" height="24" rx="6"/><rect x="209" y="776" width="24" height="24" rx="6"/><rect x="141" y="870" width="24" height="24" rx="6"/><rect x="50" y="905" width="24" height="24" rx="6"/><rect x="346" y="840" width="24" height="24" rx="6"/><rect x="429" y="907" width="24" height="24" rx="6"/><rect x="612" y="187" width="24" height="24" rx="6"/><rect x="760" y="232" width="24" height="24" rx="6"/><rect x="721" y="560" width="24" height="24" rx="6"/><rect x="537" y="246" width="24" height="24" rx="6"/><rect x="527" y="508" width="24" height="24" rx="6"/><rect x="635" y="573" width="24" height="24" rx="6"/><rect x="702" y="178" width="24" height="24" rx="6"/>
  </g>
  <g fill="#9aa0a8"><circle cx="303" cy="439" r="7"/><circle cx="225" cy="259" r="7"/><circle cx="302" cy="289" r="7"/><circle cx="174" cy="332" r="7"/><circle cx="131" cy="407" r="7"/><circle cx="166" cy="509" r="7"/><circle cx="338" cy="629" r="7"/><circle cx="52" cy="561" r="7"/><circle cx="62" cy="693" r="7"/><circle cx="221" cy="788" r="7"/><circle cx="153" cy="882" r="7"/><circle cx="62" cy="917" r="7"/><circle cx="441" cy="919" r="7"/><circle cx="624" cy="199" r="7"/><circle cx="733" cy="572" r="7"/><circle cx="772" cy="244" r="7"/></g>
  <g fill="none" stroke="#2a8cf0" stroke-width="4"><circle cx="549" cy="258" r="7"/><circle cx="539" cy="520" r="7"/><circle cx="647" cy="585" r="7"/><circle cx="714" cy="190" r="7"/></g>
  <g fill="#8c5cf0"><circle cx="446" cy="351" r="7"/><circle cx="477" cy="464" r="7"/></g>
  <rect x="0" y="954" width="645" height="86" rx="40" fill="#f6f6f6"/>
 </svg>
 <div class="t" style="left:799px;top:1377px;font-size:22px;color:#4a33d6;text-align:center;line-height:30px">⇇<br>Inflow</div>
 <div class="t" style="left:948px;top:1377px;font-size:22px;text-align:center;line-height:30px">☰<br>Outflow</div>
 <div class="t" style="left:1123px;top:1377px;font-size:22px;text-align:center;line-height:30px">◫<br>View all</div>
 <div class="t" style="left:1284px;top:1377px;font-size:22px;color:#bbb;text-align:center;line-height:30px">🗑<br>Delete</div>
</div></div>

</div>
<script>
(function(){var r=document.getElementById('root');function f(){var w=window.innerWidth||6600,h=window.innerHeight||3713;r.style.transform='scale('+(w/6600)+','+(h/3713)+')';}f();window.addEventListener('resize',f);})();
</script>
</body></html>
